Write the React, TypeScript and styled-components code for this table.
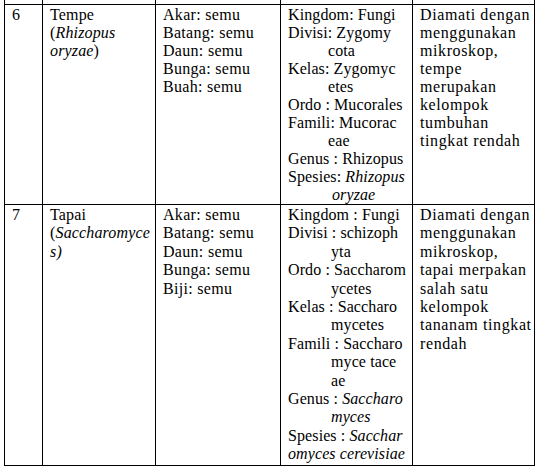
import React from "react";
import styled, { createGlobalStyle } from "styled-components";

const GlobalStyle = createGlobalStyle`
  html, body { margin: 0; padding: 0; background: #ffffff; }
  body { font-family: "Liberation Serif", "Times New Roman", serif; color: #000; }
`;

const Sheet = styled.div`
  margin-left: 4px;
  width: 531px;
  box-sizing: border-box;
  border-left: 1px solid #000;
  display: grid;
  grid-template-columns: 38px 113px 125px 132px 122px;
  grid-template-rows: 5px 200px 261px;
`;

const Cell = styled.div<{ $stub?: boolean; $lh?: number; $track?: number }>`
  box-sizing: border-box;
  border-right: 1px solid #000;
  border-bottom: 1px solid #000;
  padding: ${(p) => (p.$stub ? "0" : "1px 1px 0 7px")};
  font-family: "Liberation Serif", "Times New Roman", serif;
  font-size: 16px;
  letter-spacing: ${(p) => p.$track ?? 0}px;
  line-height: ${(p) => p.$lh ?? 18}px;
  overflow: hidden;
`;

const Line = styled.div<{ $indent?: number }>`
  white-space: nowrap;
  padding-left: ${(p) => p.$indent ?? 0}px;
`;

const I = styled.i`
  font-style: italic;
`;

type L = { t: React.ReactNode; indent?: number };

// per-column letter tracking to follow the widths of the source document
const TRACK = [0, 0.15, 0.3, 0.1, 0.6];

const TextCell = ({ lines, lh, track }: { lines: L[]; lh: number; track: number }) => (
  <Cell $lh={lh} $track={track}>
    {lines.map((l, i) => (
      <Line key={i} $indent={l.indent}>
        {l.t}
      </Line>
    ))}
  </Cell>
);

const plain = (arr: string[]): L[] => arr.map((t) => ({ t }));

const rows: { lh: number; cells: L[][] }[] = [
  {
    lh: 18,
    cells: [
      plain(["6"]),
      [
        { t: "Tempe" },
        { t: <>(<I>Rhizopus</I></> },
        { t: <><I>oryzae</I>)</> },
      ],
      plain(["Akar: semu", "Batang: semu", "Daun: semu", "Bunga: semu", "Buah: semu"]),
      [
        { t: "Kingdom: Fungi" },
        { t: "Divisi: Zygomy" },
        { t: "cota", indent: 40 },
        { t: "Kelas: Zygomyc" },
        { t: "etes", indent: 40 },
        { t: "Ordo : Mucorales" },
        { t: "Famili: Mucorac" },
        { t: "eae", indent: 40 },
        { t: "Genus : Rhizopus" },
        { t: <>Spesies: <I>Rhizopus</I></> },
        { t: <I>oryzae</I>, indent: 44 },
      ],
      plain([
        "Diamati dengan",
        "menggunakan",
        "mikroskop,",
        "tempe",
        "merupakan",
        "kelompok",
        "tumbuhan",
        "tingkat rendah",
      ]),
    ],
  },
  {
    lh: 18.4,
    cells: [
      plain(["7"]),
      [
        { t: "Tapai" },
        { t: <>(<I>Saccharomyce</I></> },
        { t: <I>s)</I> },
      ],
      plain(["Akar: semu", "Batang: semu", "Daun: semu", "Bunga: semu", "Biji: semu"]),
      [
        { t: "Kingdom : Fungi" },
        { t: "Divisi : schizoph" },
        { t: "yta", indent: 43 },
        { t: "Ordo : Saccharom" },
        { t: "ycetes", indent: 43 },
        { t: "Kelas : Saccharo" },
        { t: "mycetes", indent: 43 },
        { t: "Famili : Saccharo" },
        { t: "myce tace", indent: 43 },
        { t: "ae", indent: 43 },
        { t: <>Genus : <I>Saccharo</I></> },
        { t: <I>myces</I>, indent: 43 },
        { t: <>Spesies : <I>Sacchar</I></> },
        { t: <I>omyces cerevisiae</I> },
      ],
      plain([
        "Diamati dengan",
        "menggunakan",
        "mikroskop,",
        "tapai merpakan",
        "salah satu",
        "kelompok",
        "tananam tingkat",
        "rendah",
      ]),
    ],
  },
];

export default function App() {
  return (
    <>
      <GlobalStyle />
      <Sheet>
        {[0, 1, 2, 3, 4].map((i) => (
          <Cell key={"s" + i} $stub />
        ))}
        {rows.map((row, r) =>
          row.cells.map((lines, c) => (
            <TextCell key={r + "-" + c} lines={lines} lh={row.lh} track={TRACK[c]} />
          ))
        )}
      </Sheet>
    </>
  );
}
